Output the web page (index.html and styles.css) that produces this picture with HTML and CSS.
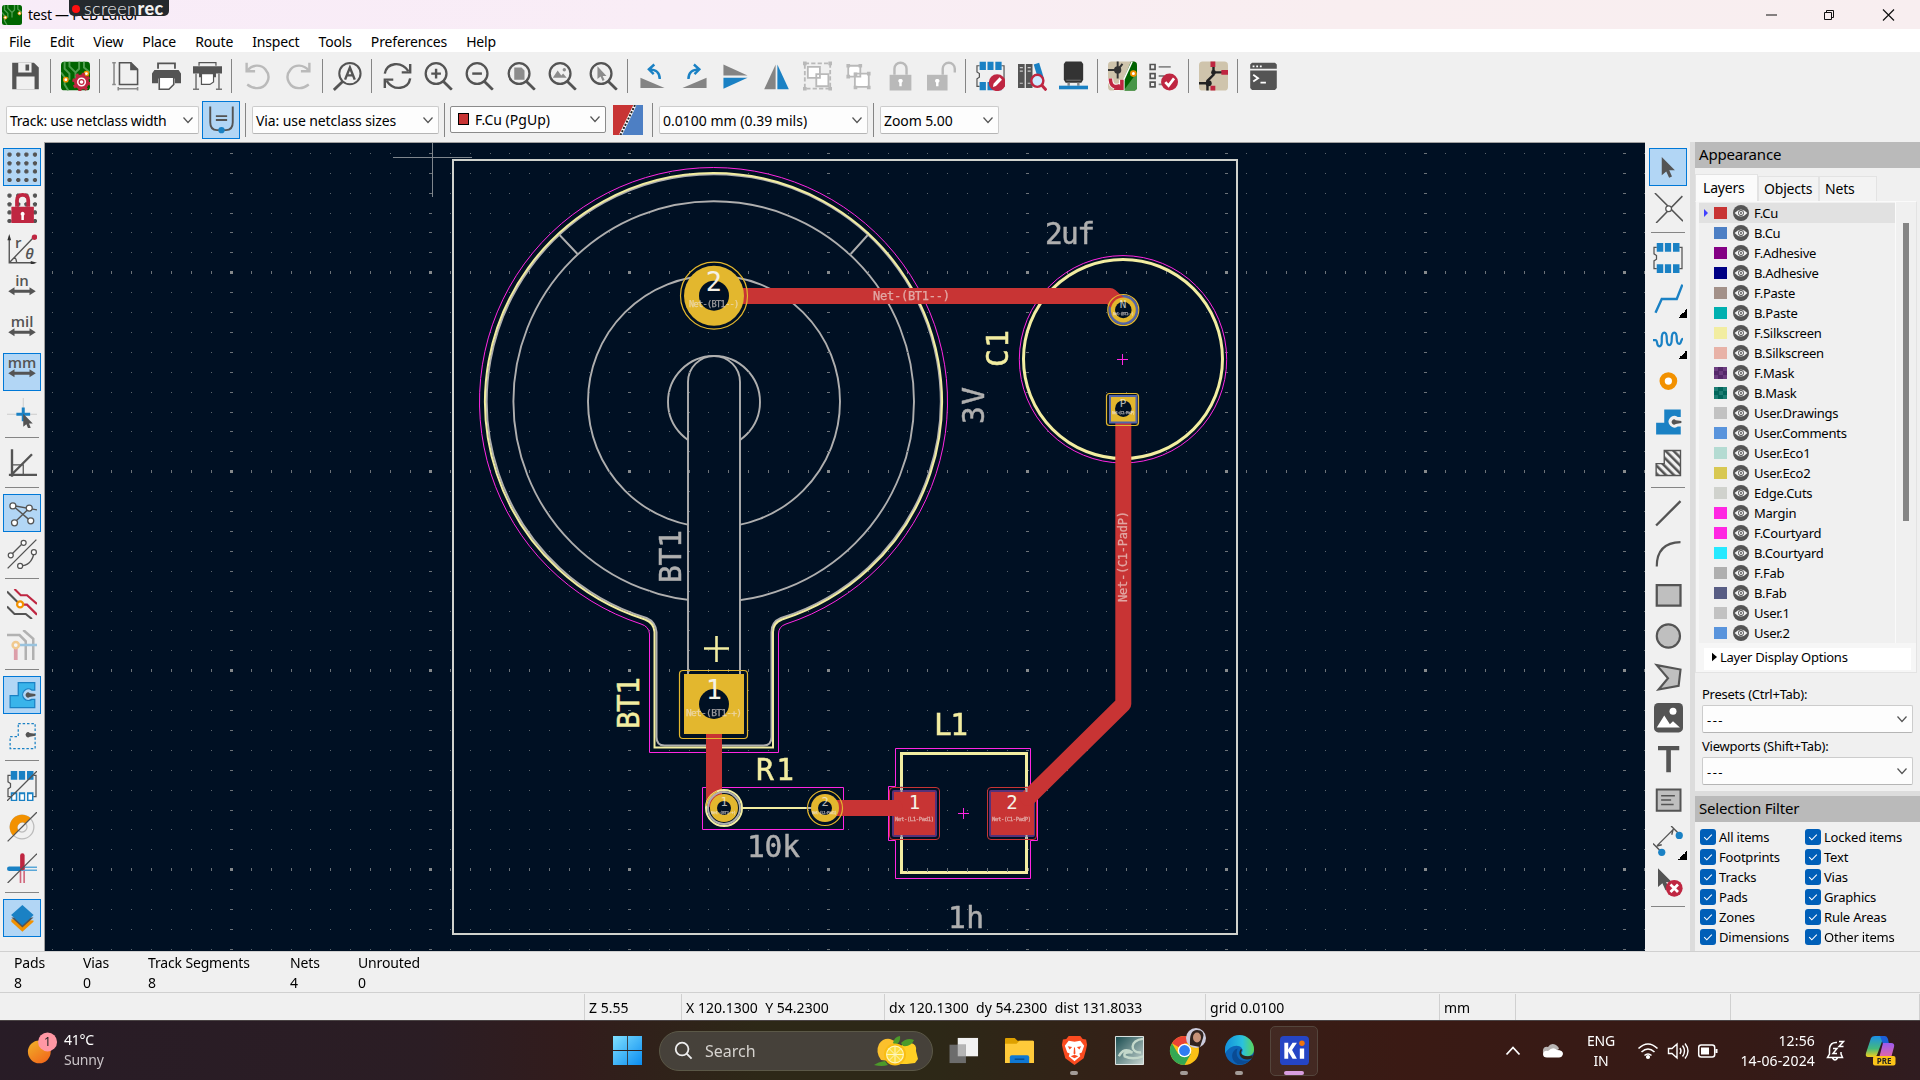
FILE: index.html
```html
<!DOCTYPE html>
<html lang="en">
<head>
<meta charset="utf-8">
<title>test — PCB Editor</title>
<link rel="stylesheet" href="styles.css">
</head>
<body>
<svg class="defs" width="0" height="0">
  <defs>
    <symbol id="chev" viewBox="0 0 12 12"><path d="M1.5 3.5 6 8.5l4.5-5" fill="none" stroke="#555" stroke-width="1.2"/></symbol>
    <symbol id="eye" viewBox="0 0 16 16"><circle cx="8" cy="8" r="8" fill="#555"/><path d="M1.6 8Q8 .8 14.400 8 8 15.200 1.600 8z" fill="#f4f4f4"/><circle cx="8" cy="8" r="2.900" fill="#555"/><circle cx="8" cy="8" r="2.100" fill="#f4f4f4"/><circle cx="8" cy="8" r="1" fill="#555"/></symbol>
    <symbol id="check" viewBox="0 0 16 16"><rect width="16" height="16" rx="3" fill="#005fb8"/><path d="m4.200 8.200 2.600 2.600 5-5.200" fill="none" stroke="#fff" stroke-width="1.100"/></symbol>
    <symbol id="board" viewBox="0 0 24 24"><rect width="24" height="24" rx="3" fill="#006400"/><path d="M3 0v6l4 4v5M7 0v4l5 5 3-3V0M0 9l3 4v6l3 5M12 9v6M19 0v5l5 4" fill="none" stroke="#4f9e4f" stroke-width="1.600"/><circle cx="21" cy="10" r="1.800" fill="#fff" stroke="#f29100" stroke-width="1.200"/><circle cx="4" cy="15" r="1.800" fill="#fff" stroke="#f29100" stroke-width="1.200"/></symbol>
    <symbol id="lens" viewBox="0 0 24 24"><circle cx="10" cy="10" r="8.600" fill="none" stroke="#545454" stroke-width="1.900"/><path d="m15.500 16 7.500 7.300" stroke="#545454" stroke-width="2.300"/></symbol>
    <symbol id="chip" viewBox="0 0 24 24"><path d="M3 3.500H.8v5.200l2 1.300v3l-2 1.300v6.200H3M21 3.500h2.200v17H21" fill="none" stroke="#545454" stroke-width="1"/><path d="M3 0h5.200v7H3zM9.500 0h5v7h-5zM16 0h5.200v7H16zM3 17h5.200v7H3zM9.500 17h5v7h-5zM16 17h5.200v7H16z" fill="#1a81c4"/></symbol>
    <symbol id="dots" viewBox="0 0 24 24"><path d="M2 .3v3.400M.3 2h3.400M9 .3v3.400M7.300 2h3.400M15.500 .3v3.400M13.800 2h3.400M22.400 .3v3.400M20.700 2H24M2 7.300v3.400M.3 9h3.400M9 7.300v3.400M7.300 9h3.400M15.500 7.300v3.400M13.800 9h3.400M22.400 7.300v3.400M20.700 9H24M2 13.800v3.400M.3 15.500h3.400M9 13.800v3.400M7.300 15.500h3.400M15.500 13.800v3.400M13.800 15.500h3.400M22.400 13.800v3.400M20.700 15.500H24M2 20.700V24M.3 22.400h3.400M9 20.700V24M7.300 22.400h3.400M15.500 20.700V24M13.800 22.400h3.400M22.400 20.700V24M20.700 22.400H24" stroke="#545454" stroke-width="2"/></symbol>
    <symbol id="dbl" viewBox="0 0 24 24"><path d="m1 13 5-3.200v2h12v-2l5 3.200-5 3.200v-2H6v2z" fill="#545454"/></symbol>
    <symbol id="zone" viewBox="0 0 24 24"><path d="M9 2h13.200v6h-2.400a4.600 4.600 0 1 0 0 7.500h2.400v6.500H2.500V12.500H9z"/></symbol>
  </defs>
</svg>

<header class="titlebar">
  <svg class="app-icon"><use href="#board"/></svg>
  <span class="title">test — PCB Editor</span>
  <div class="recorder"><i></i><span>screen<b>rec</b></span></div>
  <svg class="win-controls" viewBox="0 0 150 20"><path d="M1 10h11" stroke="#111"/><path d="M59.500 7.500h7v7h-7zM61.500 7.500v-2h7v7h-2" fill="none" stroke="#111"/><path d="m118 4.500 11 11m0-11-11 11" stroke="#111" stroke-width="1.200"/></svg>
</header>
<nav class="menubar">
  <span>File</span><span>Edit</span><span>View</span><span>Place</span><span>Route</span><span>Inspect</span><span>Tools</span><span>Preferences</span><span>Help</span>
</nav>

<div class="toolbar main-tools">
  <div class="tb"><svg viewBox="0 0 24 24"><path d="M1 1h18l4 4v18H1z" fill="#545454"/><path d="M6 1h11v8H6zM4.500 12.500h15V23h-15z" fill="#f0f0f0"/><path d="M12 2.500h3v5h-3z" fill="#545454"/></svg></div><i class="sep"></i>
  <div class="tb"><svg viewBox="0 0 24 24"><use href="#board"/><circle cx="17" cy="17" r="5" fill="#fff" stroke="#bf2641" stroke-width="2.500"/><circle cx="17" cy="17" r="6.700" fill="none" stroke="#bf2641" stroke-width="2" stroke-dasharray="2.600 2.660"/><circle cx="17" cy="17" r="2" fill="#fff" stroke="#bf2641"/></svg></div><i class="sep"></i>
  <div class="tb"><svg viewBox="0 0 24 24" fill="none" stroke="#545454" stroke-width="1.300"><path d="M7 1h9.500L22 6.500V19H7z"/><path d="M16.500 1v5.500H22" fill="#545454"/><path d="M2.500 1v18M1 1h3M1 19h3M6 22.500h16M6 21v3M22 21v3" stroke="#8a8a8a"/></svg></div>
  <div class="tb"><svg viewBox="0 0 24 24"><path d="M5 6V1.500h14V6" fill="#f0f0f0" stroke="#545454" stroke-width="1.500"/><path d="M2 7h20l2 3v8h-5v-4H5v4H0v-8z" fill="#545454"/><path d="M6 13h12v6l-4 4H6z" fill="#fff" stroke="#545454" stroke-width="1.300"/></svg></div>
  <div class="tb"><svg viewBox="0 0 24 24"><path d="M5 3.500V1h14v2.500" fill="none" stroke="#545454"/><path d="M0 4h24v6h-5v3H5v-3H0z" fill="#545454"/><path d="M7 10h10v7l-3 2H7z" fill="#fff" stroke="#545454"/><path d="M2.500 10v13M21.500 10v13M0 23h5M19 23h5" stroke="#777" stroke-width="1.300"/></svg></div><i class="sep"></i>
  <div class="tb"><svg viewBox="0 0 24 24" fill="none" stroke="#bababa" stroke-width="2"><path d="M3 1v7h7"/><path d="M3.500 7.500C8 2 15 2.500 18.500 6.500c6 7 .5 16-7.500 15.500-3 0-5.500-1.500-7.500-3"/></svg></div>
  <div class="tb"><svg viewBox="0 0 24 24" fill="none" stroke="#bababa" stroke-width="2"><path d="M21 1v7h-7"/><path d="M20.500 7.500C16 2 9 2.500 5.500 6.500c-6 7-.5 16 7.500 15.500 3 0 5.500-1.500 7.500-3"/></svg></div><i class="sep"></i>
  <div class="tb"><svg viewBox="0 0 24 24"><circle cx="14" cy="10" r="8.800" fill="none" stroke="#545454" stroke-width="1.700"/><path d="m8 16.500-7.300 7" stroke="#545454" stroke-width="2.300"/><path d="m10 15 4-10 4 10M11.500 11.500h5" fill="none" stroke="#545454" stroke-width="2"/></svg></div><i class="sep"></i>
  <div class="tb"><svg viewBox="0 0 24 24" fill="none" stroke="#545454" stroke-width="2"><path d="M1.500 10C3 1 15-1 21 8M22.500 14C21 23 9 25 3 16"/><path d="M22.500 2v7h-7M1.500 22v-7h7"/></svg></div>
  <div class="tb"><svg viewBox="0 0 24 24"><use href="#lens"/><path d="M10 6v8M6 10h8" stroke="#545454" stroke-width="2"/></svg></div>
  <div class="tb"><svg viewBox="0 0 24 24"><use href="#lens"/><path d="M6 10h8" stroke="#545454" stroke-width="2"/></svg></div>
  <div class="tb"><svg viewBox="0 0 24 24"><use href="#lens"/><path d="M6 5h6l2.500 2.500V15H6z" fill="#8c8c8c"/></svg></div>
  <div class="tb"><svg viewBox="0 0 24 24"><use href="#lens"/><path d="m4 13.500 4-6 3 4 1.500-1.500 3 3.500z" fill="#8c8c8c"/><circle cx="13.500" cy="6.800" r="1.400" fill="#8c8c8c"/></svg></div>
  <div class="tb"><svg viewBox="0 0 24 24"><use href="#lens"/><path d="M7 4v10.500l2.600-2 1.600 3.700 1.700-.8-1.600-3.500h3.200z" fill="#8c8c8c"/></svg></div><i class="sep"></i>
  <div class="tb"><svg viewBox="0 0 24 24"><path d="M2 13.500V22h20z" fill="#848484"/><path d="M18 14.500C18 9 15 6.500 9 6.500m4.500-4L9 6.500l4 4" fill="none" stroke="#1a81c4" stroke-width="2"/></svg></div>
  <div class="tb"><svg viewBox="0 0 24 24"><path d="M22 13.500V22H2z" fill="#848484"/><path d="M7 14.500C7 9 10 6.500 16 6.500m-4.500-4 4.500 4-4 4" fill="none" stroke="#1a81c4" stroke-width="2"/></svg></div>
  <div class="tb"><svg viewBox="0 0 24 24"><path d="M2 2.500v9h20z" fill="#848484"/><path d="M2 22.500v-9h20z" fill="#1a81c4"/></svg></div>
  <div class="tb"><svg viewBox="0 0 24 24"><path d="M11.300 2.500V23H1.800z" fill="#848484"/><path d="M12.700 2.500V23h9.500z" fill="#1a81c4"/></svg></div>
  <div class="tb"><svg viewBox="0 0 24 24" fill="#fff" stroke="#b9b9b9"><path d="M1.500 1.500h21v21h-21z" fill="none" stroke-dasharray="3.500 1.800" stroke-width="1.500"/><path d="M4 4.500h10v9H4zM11 10.500h10v10H11z" stroke-width="1.500"/><path d="M0 0h3v3H0zM21 0h3v3h-3zM0 21h3v3H0zM21 21h3v3h-3z" fill="#b9b9b9" stroke="none"/></svg></div>
  <div class="tb"><svg viewBox="0 0 24 24" fill="none" stroke="#b9b9b9" stroke-width="1.500"><path d="M3.500 3.500h10v9h-10zM9 10h11.500v11H9z" fill="#fff"/><path d="M2 2h3v3H2zM12 2h3v3h-3zM2 11h3v3H2zM19 8.500h3v3h-3zM8 20h3v3H8zM19 20h3v3h-3zM8 9h3v3H8z" fill="#b9b9b9" stroke="none"/></svg></div>
  <div class="tb"><svg viewBox="0 0 24 24"><path d="M7 11V6a5 5 0 0 1 10 0v5" fill="none" stroke="#b9b9b9" stroke-width="2"/><path d="M3 11h18v13H3z" fill="#b9b9b9"/><path d="M12 14.500a1.600 1.600 0 0 1 1 3v3h-2v-3a1.600 1.600 0 0 1 1-3" fill="#fff"/></svg></div>
  <div class="tb"><svg viewBox="0 0 24 24"><path d="M13 11V6a5 5 0 0 1 10 0v3" fill="none" stroke="#b9b9b9" stroke-width="2"/><path d="M0 11h17v13H0z" fill="#b9b9b9"/><path d="M8.500 14.500a1.600 1.600 0 0 1 1 3v3h-2v-3a1.600 1.600 0 0 1 1-3" fill="#fff"/></svg></div><i class="sep"></i>
  <div class="tb"><svg viewBox="0 0 24 24"><use href="#chip"/><circle cx="17.500" cy="17.500" r="7" fill="#bf2641"/><path d="m14 21 .5-2.500 5-5.500 2 2-5 5.300z" fill="#fff"/></svg></div>
  <div class="tb"><svg viewBox="0 0 24 24"><path d="M0 2h5.500v20H0zM6.500 2H12v20H6.500z" fill="#545454"/><path d="M1.500 5h2.500M1.500 8h2.500M8 5h2.500M8 8h2.500M1.500 18h2.500M8 18h2.500" stroke="#ccc"/><path d="m13 2.500 4.500-1.500 4 13-4.500 1.500z" fill="#1a81c4"/><circle cx="16" cy="16" r="5" fill="#cfeaff" stroke="#bf2641" stroke-width="2"/><path d="m19.500 19.500 4 4.300" stroke="#bf2641" stroke-width="2.500"/></svg></div>
  <div class="tb"><svg viewBox="0 0 24 24"><path d="M5.500 0h13L20 2v13l-1.500 2.500h-13L4 15V2z" fill="#333"/><path d="M6 15.500h12" stroke="#777" stroke-width=".8"/><path d="M7 17.500h2V20H7zM15 17.500h2V20h-2z" fill="#888"/><path d="M0 20h24v3H0z" fill="#1a81c4"/></svg></div><i class="sep"></i>
  <div class="tb"><svg viewBox="0 0 24 24"><rect width="24" height="24" rx="3" fill="#cfc4ac"/><path d="M19 0h2q3 0 3 3v18q0 3-3 3H9z" fill="#006400"/><path d="M13 24 24 9v12q0 3-3 3z" fill="#489648"/><path d="M20 0 9 24" stroke="#fff" stroke-width="1.300"/><path d="M8 0v14M0 7h8l4-5" stroke="#333" stroke-width="1.600" fill="none"/><circle cx="8" cy="7" r="3" fill="#333"/><path d="M2 14c0 6 3 8 8 6M11.500 15v7H5" fill="none" stroke="#fff" stroke-width="4.500"/><path d="M2 14c0 6 3 8 8 6M11.500 15v7H5" fill="none" stroke="#bf2641" stroke-width="3"/><circle cx="21" cy="10" r="2" fill="#fff" stroke="#f29100" stroke-width="1.500"/></svg></div>
  <div class="tb"><svg viewBox="0 0 24 24"><path d="M1 2.500h4v4H1zM1 10h4v4H1zM1 17h4v4H1z" fill="none" stroke="#545454" stroke-width="1.400"/><path d="M8 4.500h10M8 12h5M8 19h3" stroke="#8a8a8a" stroke-width="1.500"/><circle cx="17" cy="17" r="7" fill="#bf2641"/><path d="m13.500 17 2.700 3 4.500-6" stroke="#fff" stroke-width="2.200" fill="none"/></svg></div><i class="sep"></i>
  <div class="tb"><svg viewBox="0 0 24 24"><rect width="24" height="24" rx="3" fill="#cfc4ac"/><path d="M12 4v7l-5 5v8M12 9h7M0 18h9" stroke="#222" stroke-width="2" fill="none"/><circle cx="12" cy="9" r="2" fill="#222"/><circle cx="8" cy="18" r="2.500" fill="#222"/><path d="M9.500 0h4v4.500h-4zM18.500 7H24v4h-5.500zM9.500 20h4v4h-4z" fill="#bf2641"/></svg></div><i class="sep"></i>
  <div class="tb"><svg viewBox="0 0 24 24"><path d="M2.500 1h19l1.500 1.500V6H1V2.500zM1 7.500h22V22l-1.500 1.500h-19L1 22z" fill="#545454"/><path d="M3 4h1.500M6 4h1.500M9 4h1.500" stroke="#fff" stroke-width="1.500"/><path d="m3.500 11 4 2.800-4 2.800M9.500 17.500H14" stroke="#fff" stroke-width="1.500" fill="none"/></svg></div>
</div>

<div class="toolbar sub-tools">
  <div class="combo w-track"><span>Track: use netclass width</span><svg><use href="#chev"/></svg></div>
  <div class="sq on"><svg viewBox="0 0 24 24"><path d="M2 0v14q0 7 6 7h8q6 0 6-7V0" fill="none" stroke="#545454" stroke-width="1.700"/><path d="M7 8.500h10M7 12h10" stroke="#545454" stroke-width="1.600"/><circle cx="12" cy="21" r="2.800" fill="#1a81c4"/></svg></div>
  <i class="vsep"></i>
  <div class="combo w-via"><span>Via: use netclass sizes</span><svg><use href="#chev"/></svg></div>
  <i class="vsep"></i>
  <div class="combo w-layer"><b class="swatch"></b><span>F.Cu (PgUp)</span><svg><use href="#chev"/></svg></div>
  <svg class="pair" viewBox="0 0 30 30"><path d="M0 0h22L7 30H0z" fill="#c83434"/><path d="M23 0h7v30H8z" fill="#4d7fc4"/><path d="M22 0 7.500 30" stroke="#fff" stroke-width="3"/><path d="M22 0 7.500 30" stroke="#222" stroke-width="2" stroke-dasharray="2 1.500"/></svg>
  <i class="vsep"></i>
  <div class="combo w-grid"><span>0.0100 mm (0.39 mils)</span><svg><use href="#chev"/></svg></div>
  <i class="vsep"></i>
  <div class="combo w-zoom"><span>Zoom 5.00</span><svg><use href="#chev"/></svg></div>
</div>

<main class="workspace">
  <aside class="rail left">
    <div class="rb on"><svg viewBox="0 0 24 24"><use href="#dots"/></svg></div>
    <div class="rb"><svg viewBox="0 0 24 24"><use href="#dots"/><path d="M8 11V6q0-4.500 4.500-4.500T17 6v5" fill="none" stroke="#bf2641" stroke-width="3"/><path d="M3.500 11h18v13h-18z" fill="#bf2641"/><path d="M12.500 15a1.700 1.700 0 0 1 1 3v3.500h-2V18a1.700 1.700 0 0 1 1-3" fill="#fff"/></svg></div>
    <div class="rb"><svg viewBox="0 0 24 24"><path d="M1.800 4v19H22M1.800 23 21 3M6 18.500q2 2 1.500 4.500" fill="none" stroke="#545454" stroke-width="1.100"/><path d="M.3 5 1.800 0l1.500 5zM19 21.500l5 1.500-5 1.500z" fill="#333"/><circle cx="22" cy="2.500" r="2.200" fill="#bf2641"/><text x="6.300" y="11.500" class="it">r</text><text x="14.500" y="19.800" class="it i" font-size="11">θ</text></svg></div>
    <div class="rb"><svg viewBox="0 0 24 24"><use href="#dbl"/><text x="12" y="8.500" class="it" text-anchor="middle" font-size="11">in</text></svg></div>
    <div class="rb"><svg viewBox="0 0 24 24"><use href="#dbl"/><text x="12" y="8.500" class="it" text-anchor="middle" font-size="11">mil</text></svg></div>
    <div class="rb on"><svg viewBox="0 0 24 24"><use href="#dbl"/><text x="12" y="8.500" class="it" text-anchor="middle" font-size="11">mm</text></svg></div>
    <div class="rb"><svg viewBox="0 0 24 24"><path d="M13 0v12M0 13h24" stroke="#ccc" stroke-width=".8"/><path d="M13 7.500v11M7.500 13h11" stroke="#1a81c4" stroke-width="2.400"/><path d="M13 12.500v10.500l2.500-2 1.500 3.500 2-.8-1.400-3.400h3z" fill="#545454"/></svg></div>
    <i class="hsep"></i>
    <div class="rb"><svg viewBox="0 0 24 24"><path d="M4 1v22M1.500 21.500H24M3 22 20 5" stroke="#545454" stroke-width="1.900" fill="none"/><path d="M4.500 13.500H13v7.500" stroke="#545454" fill="none"/></svg></div>
    <i class="hsep"></i>
    <div class="rb on"><svg viewBox="0 0 24 24"><path d="m4.500 6 14.500 12.500M5.500 20 18 8M4.500 6 24 9.500" stroke="#545454" stroke-width="1.100"/><g fill="#fff" stroke="#545454"><circle cx="4.700" cy="6.300" r="2.400"/><circle cx="17.800" cy="8" r="2.400"/><circle cx="19" cy="18.200" r="2.400"/><circle cx="6" cy="19.800" r="2.400"/></g></svg></div>
    <div class="rb"><svg viewBox="0 0 24 24"><path d="M.5 23.500 23.500.5M3 13 13 3M10.500 21.500c7 0 10-5 11-10" fill="none" stroke="#545454" stroke-width="1.100"/><g fill="#fff" stroke="#545454"><circle cx="3" cy="13" r="2"/><circle cx="13.300" cy="3" r="2"/><circle cx="21.500" cy="10.500" r="2"/><circle cx="10.500" cy="21.500" r="2"/></g></svg></div>
    <i class="hsep"></i>
    <div class="rb"><svg viewBox="0 0 24 24" fill="none" stroke-width="1.700"><path d="m0 2 10 10M0 14l6 6h9l5 4" stroke="#545454"/><path d="m6 0 5 5h5l8 7M10 12.500h6l8 8" stroke="#bf2641"/><circle cx="10.500" cy="12.300" r="2.400" fill="#fff" stroke="#f29100" stroke-width="1.800"/></svg></div>
    <div class="rb faded"><svg viewBox="0 0 24 24" fill="none" stroke-width="2"><path d="M0 4h10l5 5v15M13 0l8 7v17" stroke="#545454"/><path d="M7 12v12" stroke="#bf2641" stroke-width="3"/><path d="M7 12h17" stroke="#1a81c4"/><circle cx="7" cy="12" r="2.500" fill="#fff" stroke="#f29100"/></svg></div>
    <i class="hsep"></i>
    <div class="rb on"><svg viewBox="0 0 24 24"><use href="#zone" fill="#39b4ea" stroke="#1a81c4" stroke-width="1"/><path d="M18.200 10.500a2 2 0 1 0 0 3l4.500-.8v-1.500z" fill="#545454"/></svg></div>
    <div class="rb"><svg viewBox="0 0 24 24"><path d="M9 2h13.500v20H2.500v-9.500H9z" fill="none" stroke="#1a81c4" stroke-dasharray="2 1.500"/><path d="M18.200 9.500a2 2 0 1 0 0 3l4.500-.8v-1.500z" fill="#545454"/></svg></div>
    <i class="hsep"></i>
    <div class="rb"><svg viewBox="0 0 24 24"><use href="#chip"/><path d="M4.200 18.500h2.800V23H4.200zM10.700 18.500h2.800V23h-2.800zM17.200 18.500H20V23h-2.800z" fill="#fff"/><path d="M0 24 24 0" stroke="#545454"/></svg></div>
    <div class="rb"><svg viewBox="0 0 24 24"><circle cx="12" cy="12" r="9.500" fill="none" stroke="#bbb"/><circle cx="12" cy="12" r="4" fill="none" stroke="#bbb"/><path d="M5 19A9.900 9.900 0 0 1 19 5l-4.200 4.200a4 4 0 0 0-5.600 5.600z" fill="#f29100"/><path d="M.5 23.500 24 0" stroke="#545454"/></svg></div>
    <div class="rb"><svg viewBox="0 0 24 24"><path d="M10.800 12v12M13.700 12v12" stroke="#d0647a" stroke-width="1.300"/><path d="M12 11.300h12M12 13.700h12" stroke="#5aa7d8" stroke-width="1.200"/><path d="M1.800 12.500H11" stroke="#1a81c4" stroke-width="3.600" stroke-linecap="round"/><path d="M12.300 2v10" stroke="#bf2641" stroke-width="3.600" stroke-linecap="round"/><path d="M.5 24 24 .5" stroke="#545454"/></svg></div>
    <i class="hsep"></i>
    <div class="rb on"><svg viewBox="0 0 24 24"><path d="m3.500 15 8.800 8 8.900-8v-1L3.500 13z" fill="#f29100"/><path d="m3.500 11.500 8.800 8 8.900-8z" fill="#545454"/><path d="m12.300 1.500 9 8-9 8.500-9-8.500z" fill="#1a81c4"/></svg></div>
  </aside>

  <svg class="pcb" viewBox="45 143 1600 808">
    <defs>
      <g id="gr"><path d="M21 1.500h1M41 1.500h1M61 1.500h1M80 1.500h1M100 1.500h1M120 1.500h1M140 1.500h1M160 1.500h1M180 1.500h1" stroke="#5b646c"/><path d="M0 1.500h3" stroke="#6b7278"/></g>
      <pattern id="grid" x="230" y="271" width="199" height="199" patternUnits="userSpaceOnUse">
        <path d="M21.500 0v3M41.500 0v3M61.500 0v3M80.500 0v3M100.500 0v3M120.500 0v3M140.500 0v3M160.500 0v3M180.500 0v3" stroke="#6b7278"/>
        <path d="M0 0h3v3H0z" fill="#868a8c"/>
        <use href="#gr" y="20"/><use href="#gr" y="40"/><use href="#gr" y="60"/><use href="#gr" y="80"/><use href="#gr" y="100"/><use href="#gr" y="120"/><use href="#gr" y="140"/><use href="#gr" y="159"/><use href="#gr" y="179"/>
      </pattern>
    </defs>
    <g class="fab">
      <circle cx="713.700" cy="401.500" r="200.300"/><circle cx="714" cy="401.500" r="126"/><circle cx="714" cy="402" r="46"/>
      <path d="M559.600 235 577.500 254M867.800 235 850.700 254"/>
      <path d="M688 675V382a26 26 0 0 1 52 0v293z" class="slot"/>
    </g>
    <rect x="45" y="143" width="1600" height="808" fill="url(#grid)"/>
    <path class="grayline" d="M656.500 737V632Q655.500 622 646.500 618A227 227 0 1 1 781 618Q771.500 622 771.500 632V737q0 8.500-8 8.500h-99q-8 0-8-8.500z"/>
    <path class="silk" d="M654.500 747.500V632Q654 623 645 619.500A228.500 228.500 0 1 1 782 619.500Q773 623 773 632V747.500z"/>
    <path class="court" d="M649.500 752.500V634Q649 626.500 641 624A234 234 0 1 1 786 624Q778.500 626.500 778.500 634V752.500z"/>
    <path class="edge" d="M453 160h784v774H453z"/>
    <path class="cursor" d="M393 157.500h79M432.500 143v54"/>

    <circle class="court" cx="1123" cy="359.300" r="103.700"/>
    <circle class="silk w3" cx="1123" cy="359" r="99.500"/>
    <path class="court" d="M1117 359.500h11M1122.500 354v11M958 813.500h11M963.500 808v11"/>

    <path class="court" d="M702.500 787.500h141v42h-141zM895.500 748.500h135v38h7v54h-7v38h-135v-38h-7v-54h7z"/>
    <path class="silk w3" d="M901.500 753.500h125v119h-125z"/>
    <path class="silk" d="M742 808h65"/><path class="fabl" d="M806 808h6"/>
    <path class="grid-ticks" d="M907.500 868v4M927.500 868v4M947.500 868v4M967.500 868v4M987.500 868v4M1007.500 868v4"/>

    <rect class="mask" x="892" y="790" width="45" height="47" rx="2"/><rect class="mask" x="989" y="790" width="46" height="47" rx="2"/>
    <path class="cu" d="M894 792h41v43h-41zM991 792h43v43h-43z"/>
    <circle cx="1123.300" cy="310" r="13.500" class="blue"/>
    <path class="track" d="M714 296h396l13.300 12M1123.300 409v295L1028 798M714 704v96l5 6M825 808h70"/>
    <path class="fabl" d="M901.500 786v6M901.500 835v5M1026.500 786v6M1026.500 835v5"/>
    <path class="cuo" d="M893 787.500h43q3.500 0 3.500 3.500v45q0 3.500-3.500 3.500h-43q-3.500 0-3.500-3.500v-45q0-3.500 3.500-3.500zM991 787.500h42q3.500 0 3.500 3.500v45q0 3.500-3.500 3.500h-42q-3.500 0-3.500-3.500v-45q0-3.500 3.500-3.500z"/>

    <circle class="gold" cx="714" cy="295.700" r="30"/><circle class="ring" cx="714" cy="295.700" r="33.500"/><circle class="hole" cx="714" cy="295.700" r="15"/>
    <path class="gold" d="M684 674h60v60h-60z"/><rect class="ring" x="679.500" y="670.500" width="68" height="68" rx="3.500"/><circle class="hole" cx="714" cy="704" r="15"/>
    <circle class="gold" cx="1123.300" cy="310" r="12.500"/><circle class="ring" cx="1123.300" cy="310" r="15.500"/><circle class="hole" cx="1123.300" cy="310" r="8.300"/>
    <rect class="bluef" x="1109" y="395" width="28.500" height="28.500"/><path class="gold" d="M1111 397h24.500v24.500H1111z"/><rect class="ring" x="1106.500" y="393.500" width="32" height="32" rx="3"/><circle class="hole" cx="1123.300" cy="408.700" r="8.300"/>
    <circle cx="724" cy="808" r="18" fill="none" stroke="#f2eda1" stroke-width="2"/><circle cx="724" cy="808" r="16" fill="none" stroke="#afafaf" stroke-width="2"/><path d="M706 806a18 18 0 0 1 11-14.500" class="ring"/>
    <circle class="gold" cx="724" cy="808" r="14"/><circle class="hole" cx="724" cy="808" r="7"/>
    <circle class="gold" cx="825" cy="808" r="14"/><circle class="ring" cx="825" cy="808" r="17.500"/><circle class="hole" cx="825" cy="808" r="7"/>

    <g class="pt">
      <text x="714" y="291" font-size="27" text-anchor="middle">2</text>
      <text x="714" y="698.500" font-size="27" text-anchor="middle">1</text>
      <text x="914.500" y="809" font-size="19" text-anchor="middle">1</text>
      <text x="1012" y="809" font-size="19" text-anchor="middle">2</text>
      <g opacity=".75"><text x="1123" y="308" font-size="11" text-anchor="middle">N</text>
      <text x="1123" y="407" font-size="11" text-anchor="middle">P</text>
      <text x="724" y="805.500" font-size="12" text-anchor="middle">1</text>
      <text x="825" y="805.500" font-size="12" text-anchor="middle">2</text></g>
    </g>
    <g class="nets">
      <text x="873" y="300" font-size="12" textLength="77">Net-(BT1--)</text>
      <text x="689" y="307" font-size="8.500" textLength="50">Net-(BT1--)</text>
      <text x="686" y="716" font-size="9.500" textLength="56">Net-(BT1-+)</text>
      <text transform="translate(1127 602)rotate(-90)" font-size="12" textLength="91">Net-(C1-PadP)</text>
      <text x="895" y="820.500" font-size="5.500" textLength="39">Net-(L1-Pad1)</text>
      <text x="992" y="820.500" font-size="5.500" textLength="39">Net-(C1-PadP)</text>
      <text x="711" y="813.500" font-size="4" textLength="25">Net-(BT1-+)</text>
      <text x="812" y="813.500" font-size="4" textLength="25">Net-(L1-Pad1)</text>
      <text x="1113" y="314.500" font-size="4" textLength="21">Net-(BT1--)</text>
      <text x="1112" y="413.500" font-size="4" textLength="23">Net-(C1-PadP)</text>
    </g>
    <g class="lbl yel">
      <text x="756" y="780" textLength="38">R1</text>
      <text x="934" y="735" textLength="34">L1</text>
      <text transform="translate(1008 367)rotate(-90)" textLength="37">C1</text>
      <text transform="translate(639 729)rotate(-90)" textLength="52">BT1</text>
      <path d="M704 648.500h25M716.500 636v26"/>
    </g>
    <g class="lbl gry">
      <text x="1045" y="244" textLength="50">2uf</text>
      <text x="747" y="857" textLength="53">10k</text>
      <text x="948" y="928" textLength="36">1h</text>
      <text transform="translate(984 424)rotate(-90)" textLength="37">3V</text>
      <text transform="translate(681 583)rotate(-90)" textLength="53">BT1</text>
    </g>
  </svg>

  <aside class="rail right">
    <div class="rb on"><svg viewBox="0 0 24 24"><path d="M7 4v14.500l3.600-3 2.300 5 2.300-1-2.200-4.900h4.500z" fill="#545454"/></svg></div>
    <div class="rb"><svg viewBox="0 0 24 24" stroke="#545454" fill="#fff"><path d="M1.500 0 24 22.500M23.500 2.500 2.500 24" stroke-width="1.200"/><circle cx="12.500" cy="12.500" r="2.300"/></svg></div>
    <i class="hsep"></i>
    <div class="rb"><svg viewBox="0 0 24 24"><use href="#chip"/></svg></div>
    <div class="rb more"><svg viewBox="0 0 24 24"><path d="M2 23 7 12h12l4.500-11.500" fill="none" stroke="#1a81c4" stroke-width="1.900"/></svg></div>
    <div class="rb more"><svg viewBox="0 0 24 24"><path d="M0 12h2c2 0 .5 5 3 5s2-4 2-6 0-5 2-5 2 3 2 5 0 5 2 5 2-3 2-5 0-5 2-5 2 3 2 5 0 4 2 4 1-4 3-4" fill="none" stroke="#1a81c4" stroke-width="1.800"/></svg></div>
    <div class="rb"><svg viewBox="0 0 24 24"><circle cx="12.300" cy="12" r="5" fill="#fff" stroke="#f29100" stroke-width="4.200"/></svg></div>
    <div class="rb"><svg viewBox="0 0 24 24"><use href="#zone" fill="#1a81c4"/><path d="M18.200 10.500a2 2 0 1 0 0 3l4.500-.8v-1.500z" fill="#545454"/></svg></div>
    <div class="rb"><svg viewBox="0 0 24 24"><defs><pattern id="hatch" width="4.500" height="4.500" patternUnits="userSpaceOnUse" patternTransform="rotate(-45)"><path d="M1 0v5" stroke="#545454" stroke-width="2"/></pattern></defs><path d="M9 2h13v20H2.500V12.500H9z" fill="url(#hatch)" stroke="#545454" stroke-width="1.100"/></svg></div>
    <i class="hsep"></i>
    <div class="rb"><svg viewBox="0 0 24 24"><path d="m2.500 22 19.500-19.500" stroke="#545454" stroke-width="1.900"/></svg></div>
    <div class="rb"><svg viewBox="0 0 24 24"><path d="M3 22Q3 3 22 2.500" stroke="#545454" stroke-width="1.700" fill="none"/></svg></div>
    <div class="rb"><svg viewBox="0 0 24 24"><path d="M3 4h19v16.500H3z" stroke="#545454" stroke-width="1.800" fill="#bfbfbf"/></svg></div>
    <div class="rb"><svg viewBox="0 0 24 24"><circle cx="12.300" cy="12" r="9.300" stroke="#545454" stroke-width="1.700" fill="#bfbfbf"/></svg></div>
    <div class="rb"><svg viewBox="0 0 24 24"><path d="M3 2.500 22 6l-1.500 13L4.500 22l7.500-9z" stroke="#545454" stroke-width="1.700" fill="#bfbfbf"/></svg></div>
    <div class="rb"><svg viewBox="0 0 24 24"><rect x=".8" y="0" width="23.200" height="23.500" rx="3.500" fill="#545454"/><path d="m3 19.500 6-9.500 4.500 7 2.500-2.500 5.500 5z" fill="#fff"/><circle cx="16" cy="6.500" r="2.800" fill="#fff"/></svg></div>
    <div class="rb"><svg viewBox="0 0 24 24"><path d="M4 1.500h17V5h-6.700v17.500h-3.700V5H4z" fill="#545454"/></svg></div>
    <div class="rb"><svg viewBox="0 0 24 24"><path d="M3 3.500h19v17H3z" stroke="#545454" stroke-width="1.600" fill="#bfbfbf"/><path d="M6.500 8.500h11M6.500 12h8M6.500 15.500h10" stroke="#545454" stroke-width="1.200"/></svg></div>
    <div class="rb more"><svg viewBox="0 0 24 24"><path d="m3.500 15.500 13-13M0 14l8 8M14.500 0l7 7M3 16l4-1M16 3l-1 4" stroke="#545454" stroke-width="1.100"/><circle cx="7" cy="21" r="2.900" fill="#1a81c4"/><circle cx="21" cy="7.500" r="2.900" fill="#1a81c4"/></svg></div>
    <div class="rb"><svg viewBox="0 0 24 24"><path d="M4 1v15l3.500-3 2.500 5.500 3-1.200-2.500-5.300H15z" fill="#545454"/><circle cx="17" cy="17" r="6.700" fill="#bf2641"/><path d="m14 14 6 6m0-6-6 6" stroke="#fff" stroke-width="2.200"/></svg></div>
    <i class="hsep"></i>
  </aside>
  <div class="sash"></div>

  <section class="panel">
    <h2>Appearance</h2>
    <div class="tabs"><span class="active">Layers</span><span>Objects</span><span>Nets</span></div>
    <div class="sheet">
      <div class="list">
        <div class="rows">
          <div class="row sel"><i class="c1"></i><svg><use href="#eye"/></svg>F.Cu</div>
          <div class="row"><i class="c2"></i><svg><use href="#eye"/></svg>B.Cu</div>
          <div class="row"><i class="c3"></i><svg><use href="#eye"/></svg>F.Adhesive</div>
          <div class="row"><i class="c4"></i><svg><use href="#eye"/></svg>B.Adhesive</div>
          <div class="row"><i class="c5"></i><svg><use href="#eye"/></svg>F.Paste</div>
          <div class="row"><i class="c6"></i><svg><use href="#eye"/></svg>B.Paste</div>
          <div class="row"><i class="c7"></i><svg><use href="#eye"/></svg>F.Silkscreen</div>
          <div class="row"><i class="c8"></i><svg><use href="#eye"/></svg>B.Silkscreen</div>
          <div class="row"><i class="c9"></i><svg><use href="#eye"/></svg>F.Mask</div>
          <div class="row"><i class="c10"></i><svg><use href="#eye"/></svg>B.Mask</div>
          <div class="row"><i class="c11"></i><svg><use href="#eye"/></svg>User.Drawings</div>
          <div class="row"><i class="c12"></i><svg><use href="#eye"/></svg>User.Comments</div>
          <div class="row"><i class="c13"></i><svg><use href="#eye"/></svg>User.Eco1</div>
          <div class="row"><i class="c14"></i><svg><use href="#eye"/></svg>User.Eco2</div>
          <div class="row"><i class="c15"></i><svg><use href="#eye"/></svg>Edge.Cuts</div>
          <div class="row"><i class="c16"></i><svg><use href="#eye"/></svg>Margin</div>
          <div class="row"><i class="c16"></i><svg><use href="#eye"/></svg>F.Courtyard</div>
          <div class="row"><i class="c17"></i><svg><use href="#eye"/></svg>B.Courtyard</div>
          <div class="row"><i class="c18"></i><svg><use href="#eye"/></svg>F.Fab</div>
          <div class="row"><i class="c19"></i><svg><use href="#eye"/></svg>B.Fab</div>
          <div class="row"><i class="c11"></i><svg><use href="#eye"/></svg>User.1</div>
          <div class="row"><i class="c12"></i><svg><use href="#eye"/></svg>User.2</div>
        </div>
        <div class="scroll"><div class="thumb"></div></div>
      </div>
      <div class="ldo"><svg viewBox="0 0 6 10"><path d="m0 0 6 5-6 5z"/></svg>Layer Display Options</div>
    </div>
    <label class="lab1">Presets (Ctrl+Tab):</label>
    <div class="combo side"><span>---</span><svg><use href="#chev"/></svg></div>
    <label class="lab2">Viewports (Shift+Tab):</label>
    <div class="combo side"><span>---</span><svg><use href="#chev"/></svg></div>
    <h2 class="sf">Selection Filter</h2>
    <div class="filters">
      <span><svg><use href="#check"/></svg>All items</span><span><svg><use href="#check"/></svg>Locked items</span>
      <span><svg><use href="#check"/></svg>Footprints</span><span><svg><use href="#check"/></svg>Text</span>
      <span><svg><use href="#check"/></svg>Tracks</span><span><svg><use href="#check"/></svg>Vias</span>
      <span><svg><use href="#check"/></svg>Pads</span><span><svg><use href="#check"/></svg>Graphics</span>
      <span><svg><use href="#check"/></svg>Zones</span><span><svg><use href="#check"/></svg>Rule Areas</span>
      <span><svg><use href="#check"/></svg>Dimensions</span><span><svg><use href="#check"/></svg>Other items</span>
    </div>
  </section>
</main>

<section class="info">
  <div><span>Pads</span><span>8</span></div><div><span>Vias</span><span>0</span></div><div><span>Track Segments</span><span>8</span></div><div><span>Nets</span><span>4</span></div><div><span>Unrouted</span><span>0</span></div>
</section>
<footer class="status">
  <span></span><span>Z 5.55</span><span>X 120.1300&nbsp; Y 54.2300</span><span>dx 120.1300&nbsp; dy 54.2300&nbsp; dist 131.8033</span><span>grid 0.0100</span><span>mm</span><span></span><span></span>
</footer>

<div class="taskbar">
  <div class="weather">
    <svg viewBox="0 0 40 40"><defs><linearGradient id="sun" x2=".7" y2="1"><stop offset="0" stop-color="#f0b429"/><stop offset="1" stop-color="#f26a1b"/></linearGradient></defs><circle cx="14" cy="23" r="12" fill="url(#sun)"/><circle cx="22.700" cy="12.500" r="10" fill="#ff97a4"/><text x="22.700" y="17.300" font-size="13" text-anchor="middle" fill="#222">1</text></svg>
    <div><span>41°C</span><span class="dim">Sunny</span></div>
  </div>
  <div class="app"><svg viewBox="0 0 30 30"><defs><linearGradient id="win" x2="1" y2="1"><stop offset="0" stop-color="#7fe0ff"/><stop offset="1" stop-color="#0a8cf0"/></linearGradient></defs><path d="M0 0h14.600v14.600H0zM15.400 0H30v14.600H15.400zM0 15.400h14.600V30H0zM15.400 15.400H30V30H15.400z" fill="url(#win)"/></svg></div>
  <div class="search">
    <svg class="mag" viewBox="0 0 20 20"><circle cx="8.500" cy="8.500" r="6.700" fill="none" stroke="#eee" stroke-width="1.900"/><path d="m13.300 13.300 5.200 5.200" stroke="#eee" stroke-width="2"/></svg>
    <span>Search</span>
    <svg class="lemon" viewBox="0 0 44 30"><path d="M7 24Q1 16 5 8q4-6 11-5 8 2 8 10l-8 12z" fill="#fbc02d"/><path d="M27 10q5-5 10-3 6 1 5 8l2 8-3 4-8 1H24z" fill="#ffcf24"/><path d="M11 25q-7 1-11 4 8 2 14 0zM19 7q1-6 7-7 1 7-5 9zM27 7q6-6 13-3-3 7-11 6z" fill="#4c9a2a"/><circle cx="21" cy="18.500" r="11" fill="#f9bd12"/><circle cx="21" cy="18.500" r="9" fill="#fff6bd"/><circle cx="21" cy="18.500" r="7.800" fill="#fbdb3e"/><path d="M21 10.500v16M13 18.500h16m-13.500-5.500 11 11m0-11-11 11" stroke="#fff7c0"/></svg>
  </div>
  <div class="app"><svg viewBox="0 0 30 30"><path d="M8 2h21v19H8z" fill="#f2f2f2"/><path d="M-.5 9h17v19h-17z" fill="#6c6c6c"/><path d="M8 9h8.500v12H8z" fill="#b5b5b5"/></svg></div>
  <div class="app"><svg viewBox="0 0 30 30"><path d="M0 3q0-1 1-1h9l3 3h16v10H0z" fill="#dea000"/><path d="M0 8h12l3-3h14q1 0 1 1v22H0z" fill="#ffca3a"/><path d="M5 28v-6q0-2 2-2h16q2 0 2 2v6z" fill="#0f78d4"/><path d="M10 24h10" stroke="#064b8c" stroke-width="1.500"/></svg></div>
  <div class="app run"><svg viewBox="0 0 30 30"><path d="M9 0h12l2.500 3 3.500.5L28 9l-1 5-2.500 9L15 30l-9.500-7L3 14 2 9l1-5.500L6.500 3z" fill="#fb4b20"/><path d="m9 5 6 1 6-1 4 5-2.500 7-2.500 1 1 3-6 5-6-5 1-3-2.500-1L5 10z" fill="#fff"/><path d="m8 10.500 4.500 1-2.500 2.500zM22 10.500l-4.500 1 2.500 2.500zM14.500 12h1l.5 6-1 1.200-1-1.200zM11 21l4-1.500 4 1.500-4 2z" fill="#fb4b20"/></svg></div>
  <div class="app"><svg viewBox="0 0 30 30"><defs><linearGradient id="pic" x2="1" y2="1"><stop offset="0" stop-color="#174a4e"/><stop offset="1" stop-color="#c9d6d2"/></linearGradient></defs><path d="M.5.500h29v29H.5z" fill="url(#pic)" stroke="#e5ecea"/><path d="M29 3C15 4 15 18 27 17M4 21q5-10 14-4-10-1-8 4 8 4 19 0" fill="none" stroke="#c4d8cb" stroke-width="2.500"/></svg></div>
  <div class="app run"><svg viewBox="0 0 30 30"><circle cx="15" cy="15" r="15" fill="#fbc116"/><path d="M15 15 2 7.500A15 15 0 0 1 28 7.500H15z" fill="#ea4335"/><path d="M2 7.500A15 15 0 0 0 15 30l6.500-11.300H8.500z" fill="#34a853"/><circle cx="15" cy="15" r="7" fill="#fff"/><circle cx="15" cy="15" r="5.600" fill="#2f7df2"/></svg><svg class="avatar" viewBox="0 0 20 20"><circle cx="10" cy="10" r="10" fill="#ccd"/><path d="M4 17Q3 2 11 2t6 8l-3 9z" fill="#30231f"/><ellipse cx="11" cy="9.500" rx="4" ry="5" fill="#c79379"/></svg></div>
  <div class="app run"><svg viewBox="0 0 30 30"><defs><linearGradient id="ed" x2="1"><stop offset="0" stop-color="#1390dd"/><stop offset=".6" stop-color="#2ac1de"/><stop offset="1" stop-color="#5bd65a"/></linearGradient></defs><circle cx="15" cy="15" r="15" fill="#0d64b8"/><path d="M0 14A15 15 0 0 1 30 14c0 5-4 7-8 7s-6-2-4-5c1-3-2-6-6-6-5 0-9 3-12 8z" fill="url(#ed)"/><path d="M13 13c-3 7 1 15 13 12A15 15 0 0 1 13 29c-8-4-7-14 0-16" fill="#0a4b94"/><path d="M18 14c-4 4 1 9 11 6l-1 3c-8 4-16-2-12-9z" fill="#2e261a"/></svg></div>
  <div class="app active"><svg viewBox="0 0 30 30"><rect x="0" y="0" width="30" height="30" rx="4" fill="#2545c4"/><path d="M4.500 7h4v7l4.500-7h4.500l-5 7.500 5 9H13l-4.500-7.500v7.500h-4zM20.500 13h4.500v10.500h-4.500z" fill="#fff"/><circle cx="22.700" cy="7.500" r="2.800" fill="#f2740a"/></svg></div>
  <div class="tray">
    <svg class="t40" viewBox="0 0 40 30"><path d="m13.500 18.500 6.500-7 6.500 7" fill="none" stroke="#fff" stroke-width="1.800"/></svg>
    <svg class="t40" viewBox="0 0 40 30"><path d="M14 20q-5-1-4-6 1-4 5-3 3-5 8-2 3 2 3 4z" fill="#b9b5b4"/><path d="M14 21.500q-4 0-4-3.500 1-4 5-3 5-5 9-1 6 0 6 4-1 3.500-4 3.500z" fill="#fff"/></svg>
    <div class="lang"><span>ENG</span><span>IN</span></div>
    <svg class="t30" viewBox="0 0 30 30" fill="none" stroke="#fff" stroke-width="1.600"><path d="M5.500 12.500q9.500-9 19 0M8.500 16q6.500-6 13 0M11.500 19.500q3.500-3 7 0"/><circle cx="15" cy="21" r="1.300" fill="#fff"/></svg>
    <svg class="t30" viewBox="0 0 30 30" fill="none" stroke="#fff" stroke-width="1.400"><path d="M5.500 12.500H9l5-4.500v14l-5-4.500H5.500zM17 12q2 3 0 6M19.500 9.500q4 5.500 0 11M22 7.500q6 7.500 0 15"/></svg>
    <svg class="t30" viewBox="0 0 30 30"><rect x="5.700" y="9" width="16" height="12" rx="2.500" fill="none" stroke="#fff" stroke-width="1.500"/><path d="M8 11.500h8v7H8zM22.500 13h2v4h-2z" fill="#fff"/></svg>
    <div class="clock"><span>12:56</span><span>14-06-2024</span></div>
    <svg class="t43" viewBox="0 0 43 30" fill="none" stroke="#fff" stroke-width="1.500"><path d="M22 6.500q-7-.5-7.500 6.500v5L12.500 21.500h15L26 18v-2M17.500 22q2.500 4 5 0M18 12.500h4l-4 5h4M24 5.500h4.500l-4.500 5h4.500"/></svg>
    <svg class="t44" viewBox="0 0 44 34"><defs><linearGradient id="co1" x2="0" y2="1"><stop offset="0" stop-color="#1b8fe8"/><stop offset=".6" stop-color="#44b97c"/><stop offset="1" stop-color="#f4cf1c"/></linearGradient><linearGradient id="co2" x2="0" y2="1"><stop offset="0" stop-color="#9a5bf0"/><stop offset="1" stop-color="#ff6a8a"/></linearGradient></defs><path d="M13 4q1-2 4-2h9l-7 19q-1 2-3 2h-6q-3 0-2-4z" fill="url(#co1)"/><path d="M22 2h5q2 0 3 3l1 5h-6z" fill="#1b5fd8"/><path d="M25 9h8q4 0 3 4l-3 11q-1 4-4 4h-9z" fill="url(#co2)"/><rect x="15" y="22" width="22.500" height="9.500" rx="2" fill="#fcc419"/><text x="26.200" y="29.800" font-size="8" font-weight="700" text-anchor="middle" fill="#222">PRE</text></svg>
  </div>
</div>
</body>
</html>
```
FILE: styles.css
```css
* { box-sizing: border-box; }
body {
  margin: 0; width: 1920px; height: 1080px; overflow: hidden;
  display: flex; flex-direction: column;
  font: 14px/20px "Noto Sans", "Open Sans", sans-serif;
  letter-spacing: -0.25px; color: #000; background: #f0f0f0; white-space: nowrap;
}
svg { display: block; flex: none; letter-spacing: 0; }
.defs { position: absolute; }
i, b { font-style: normal; }

.titlebar { height: 29px; flex: none; display: flex; position: relative; align-items: center; background: linear-gradient(90deg, #f8ecf8 0%, #f9edf6 35%, #f9eef0 70%, #f8eef0 100%); }
.app-icon { width: 20px; height: 20px; margin: 0 6px 0 2px; }
.win-controls { width: 150px; height: 20px; margin: 0 5px 0 auto; }
.recorder { position: absolute; left: 69px; top: 0; width: 100px; height: 16px; background: #24292d; border-radius: 0 0 5px 5px; display: flex; align-items: center; gap: 4px; padding-left: 3px; color: #f2f2f2; font: 300 18px/14px Lato, sans-serif; letter-spacing: .45px; }
.recorder i { width: 8px; height: 8px; border-radius: 50%; background: #ff1010; margin-top: 2px; flex: none; }
.recorder b { font-weight: 900; }

.menubar { height: 23px; flex: none; background: #fff; display: flex; align-items: center; padding-left: 9px; letter-spacing: -.15px; }
.menubar span { margin-right: 19px; line-height: 23px; padding-top: 2px; }

.toolbar { flex: none; display: flex; align-items: center; }
.main-tools { height: 48px; padding-left: 5.400px; }
.tb { width: 41.200px; flex: none; display: flex; justify-content: center; }
.tb svg { width: 29px; height: 30px; }
.sep { width: 8.400px; height: 34px; flex: none; background: linear-gradient(#858585, #858585) 3px 0 / 1px 100% no-repeat; }

.sub-tools { height: 40px; padding-left: 6px; }
.combo { height: 28px; border: 1px solid #ccc; border-bottom-color: #b5b5b5; border-radius: 2px; background: #fdfdfd; display: flex; align-items: center; justify-content: space-between; padding: 0 4px 0 3px; }
.combo span { padding-top: 1px; }
.combo svg { width: 12px; height: 12px; }
.vsep { width: 1px; height: 34px; background: #858585; margin: 0 6px 0 5px; }
.w-track { width: 193px; margin-right: 3px; }
.w-via { width: 187px; letter-spacing: -.1px; }
.w-layer { width: 156px; height: 27px; border-color: #8b8b8b; margin-bottom: 2px; margin-left: -1px; letter-spacing: 0; }
.w-layer span { margin: 0 auto 0 6px; }
.swatch { width: 11px; height: 12px; margin-left: 4px; border: 1px solid #000; background: #c83434; }
.pair { width: 30px; height: 30px; margin: 0 4px 0 7px; }
.w-grid { width: 209px; letter-spacing: 0; }
.w-zoom { width: 119px; letter-spacing: -.1px; }
.sq { width: 38px; height: 38px; display: flex; align-items: center; justify-content: center; }
.sq svg { width: 27px; height: 28px; }
.on { background: #b2d6f5; outline: 1px solid #0078d7; outline-offset: -1px; }

.workspace { flex: none; height: 810px; display: flex; margin-top: 2px; }
.rail { width: 45px; display: flex; flex-direction: column; align-items: center; padding-top: 6px; flex: none; }
.rb { width: 38px; height: 38px; margin-bottom: 3px; display: flex; align-items: center; justify-content: center; flex: none; }
.rb svg { width: 30px; height: 30px; }
.faded { opacity: .4; }
.hsep { width: 34px; height: 1px; flex: none; background: #858585; margin: 2px 0 6px; }
.more { background: linear-gradient(135deg, transparent 50%, #000 50%) 100% 100% / 9px 9px no-repeat; }
.it { font-family: "Open Sans", sans-serif; font-weight: 600; fill: #545454; font-size: 12px; }
.i { font-style: italic; }
.left { border-right: 1px solid #a0a0a0; }

.pcb { width: 1600px; height: 809px; background: #001023; border-top: 1px solid #a0a0a0; }
.fab { fill: none; stroke: #afafaf; stroke-width: 1.900; }
.slot { fill: #001023; }
.fabl { stroke: #afafaf; stroke-width: 2; }
.grayline { fill: none; stroke: #afafaf; stroke-width: 2; }
.silk { fill: none; stroke: #f2eda1; stroke-width: 2; }
.w3 { stroke-width: 3; }
.court { fill: none; stroke: #ff26e2; stroke-width: 1; }
.edge { fill: none; stroke: #d0d2cd; stroke-width: 2; }
.cursor { stroke: #7f868d; }
.grid-ticks { stroke: #6b7278; }
.mask { fill: #56327a; }
.cu { fill: #c83434; }
.cuo { fill: none; stroke: #c83434; }
.track { fill: none; stroke: #c83434; stroke-width: 16; stroke-linejoin: round; stroke-linecap: round; }
.blue { fill: none; stroke: #5364a8; stroke-width: 3; }
.bluef { fill: #5364a8; }
.gold { fill: #e3b72e; }
.ring { fill: none; stroke: #e3b72e; stroke-width: 1.200; }
.hole { fill: #001023; }
.pt { fill: #f4f1e6; font-family: "DejaVu Sans Mono", monospace; }
.nets { fill: #f0e6e0; stroke: #f0e6e0; stroke-width: .25; opacity: .65; font-family: "DejaVu Sans Mono", monospace; }
.lbl { font: 29.500px "DejaVu Sans Mono", monospace; }
.yel { fill: #f2eda1; stroke: #f2eda1; stroke-width: .5; }
.yel path { stroke-width: 2.600; }
.gry { fill: #afafaf; stroke: #afafaf; stroke-width: .5; }

.sash { width: 5px; background: #dcdcdc; }
.panel { width: 225px; flex: none; display: flex; flex-direction: column; font-size: 13px; }
h2 { margin: 0; height: 26px; flex: none; background: #bababa; font: 15px/24px "Noto Sans", sans-serif; letter-spacing: -.2px; padding-left: 4px; }
.tabs { display: flex; align-items: flex-end; height: 33px; flex: none; font-size: 14px; }
.tabs span { height: 25px; line-height: 24px; border: 1px solid #e3e3e3; border-bottom: 0; padding-left: 5px; width: 61px; background: #f3f3f3; letter-spacing: -.2px; }
.tabs .active { width: 63px; height: 27px; background: #fbfbfb; padding-left: 7px; line-height: 25px; }
.tabs span:last-child { width: 58px; padding-left: 5px; }
.sheet { height: 472px; flex: none; width: 222px; border: 1px solid #e3e3e3; border-top-color: #fafafa; background: #f6f6f6; padding-left: 3px; }
.list { display: flex; height: 441px; background: #f0f0f0; }
.rows { width: 197px; border-right: 1px solid #fafafa; padding-top: 1px; }
.row { height: 20px; display: flex; align-items: center; width: 196px; padding-left: 15px; }
.row.sel { background: #e1e1e1; padding-left: 5px; }
.row.sel::before { content: ""; width: 4px; height: 8px; margin-right: 6px; background: #4040ff; clip-path: polygon(0 0, 100% 50%, 0 100%); }
.row i { width: 13px; height: 12px; margin-right: 6px; }
.row svg { width: 16px; height: 16px; margin-right: 5px; }
.c1 { background: #c83434; } .c2 { background: #4d7fc4; } .c3 { background: #840084; } .c4 { background: #000084; }
.c5 { background: #a39189; } .c6 { background: #00b0b0; } .c7 { background: #f2eda1; } .c8 { background: #e8b2a7; }
.c9 { background: repeating-conic-gradient(#55296a 0 25%, #6c3d80 0 50%) 0 0 / 9px 8px; }
.c10 { background: repeating-conic-gradient(#02665b 0 25%, #1d7d73 0 50%) 0 0 / 9px 8px; }
.c11 { background: #c2c2c2; } .c12 { background: #5994dc; } .c13 { background: #b4dbd2; } .c14 { background: #d8c852; }
.c15 { background: #d0d2cd; } .c16 { background: #ff26e2; } .c17 { background: #26e9ff; } .c18 { background: #afafaf; } .c19 { background: #585d84; }
.thumb { width: 6px; height: 298px; margin: 21px 0 0 7px; background: #858585; }
.scroll { flex: 1; }
.ldo { margin: 5px 0 0 5px; width: 207px; height: 22px; background: #fff; display: flex; align-items: center; padding: 0 0 4px 8px; gap: 3px; }
.ldo svg { width: 5px; height: 10px; }
.lab1, .lab2 { padding-left: 7px; height: 20px; line-height: 18px; }
.lab1 { margin-top: 12px; }
.lab2 { margin-top: 4px; }
.side { width: 211px; margin-left: 7px; flex: none; }
.side span { letter-spacing: 1.500px; padding-left: 1px; }
.sf { margin-top: 6px; border-top: 5px solid #dcdcdc; height: 31px; }
.filters { display: grid; grid-template-columns: 105px 1fr; grid-auto-rows: 20px; padding: 5px 0 0 5px; letter-spacing: -.2px; }
.filters span { display: flex; align-items: center; gap: 3px; }
.filters svg { width: 16px; height: 16px; }

.info { height: 42px; margin-top: -1px; padding-top: 1px; flex: none; border-top: 1px solid #d0d0d0; border-bottom: 1px solid #d0d0d0; display: grid; grid-template-columns: 69px 65px 142px 68px 200px; padding-left: 14px; letter-spacing: -.15px; }
.info div { display: flex; flex-direction: column; }
.status { height: 27px; flex: none; display: grid; grid-template-columns: 585px 97px 203px 321px 234px 76px 215px 1fr; line-height: 28px; letter-spacing: .02px; }
.status span { border-right: 1px solid #d0d0d0; padding-left: 4px; margin: 1px 0; }

.taskbar { height: 60px; flex: none; margin-top: auto; display: flex; align-items: center; color: #fff; border-top: 1px solid #4a4344; background: linear-gradient(90deg, #281c26 0, #2b1d24 430px, #321c1c 570px, #2d2817 760px, #2d2817 940px, #351f17 1160px, #3a1a14 1400px, #351a16 1750px, #301c20 1920px); }
.weather { width: 599.500px; display: flex; padding: 0 0 2px 26px; }
.weather svg { width: 38px; height: 40px; margin-top: -1px; }
.weather span { display: block; }
.dim { color: #c9c3c7; }
.app { width: 55px; height: 58px; display: flex; justify-content: center; align-items: center; flex: none; position: relative; }
.app svg { width: 29px; height: 29px; overflow: visible; }
.app .avatar { position: absolute; width: 20px; height: 20px; left: 29px; top: 6px; }
.run::after, .active.app::after { content: ""; position: absolute; bottom: 5px; width: 8px; height: 4px; border-radius: 2px; background: #a39c98; }
.active.app::after { width: 20px; background: #d89ee0; }
.active.app::before { content: ""; position: absolute; inset: 4px 4px 4px 3px; border: 1px solid #54453c; border-radius: 5px; background: rgba(255,255,255,.06); }
.active.app svg { position: relative; }
.search { width: 274px; height: 40px; margin: 0 3.500px 0 4.500px; flex: none; border-radius: 20px; border: 1px solid #5b5847; background: #46413a; display: flex; align-items: center; color: #d6d3cf; font-size: 16px; letter-spacing: 0; }
.mag { width: 19px; height: 19px; margin: 0 12px 0 14px; }
.lemon { width: 44px; height: 30px; margin: 0 14px 0 auto; }
.tray { margin-left: auto; display: flex; align-items: center; padding-right: 18px; }
.tray > svg { height: 30px; }
.t40 { width: 40px; } .t30 { width: 30px; } .t43 { width: 43px; } .tray .t44 { width: 44px; height: 34px; }
.lang { width: 56px; text-align: center; margin-right: 4px; }
.clock { width: 92px; text-align: right; letter-spacing: .15px; }
.tray span { display: block; line-height: 20px; }
```
